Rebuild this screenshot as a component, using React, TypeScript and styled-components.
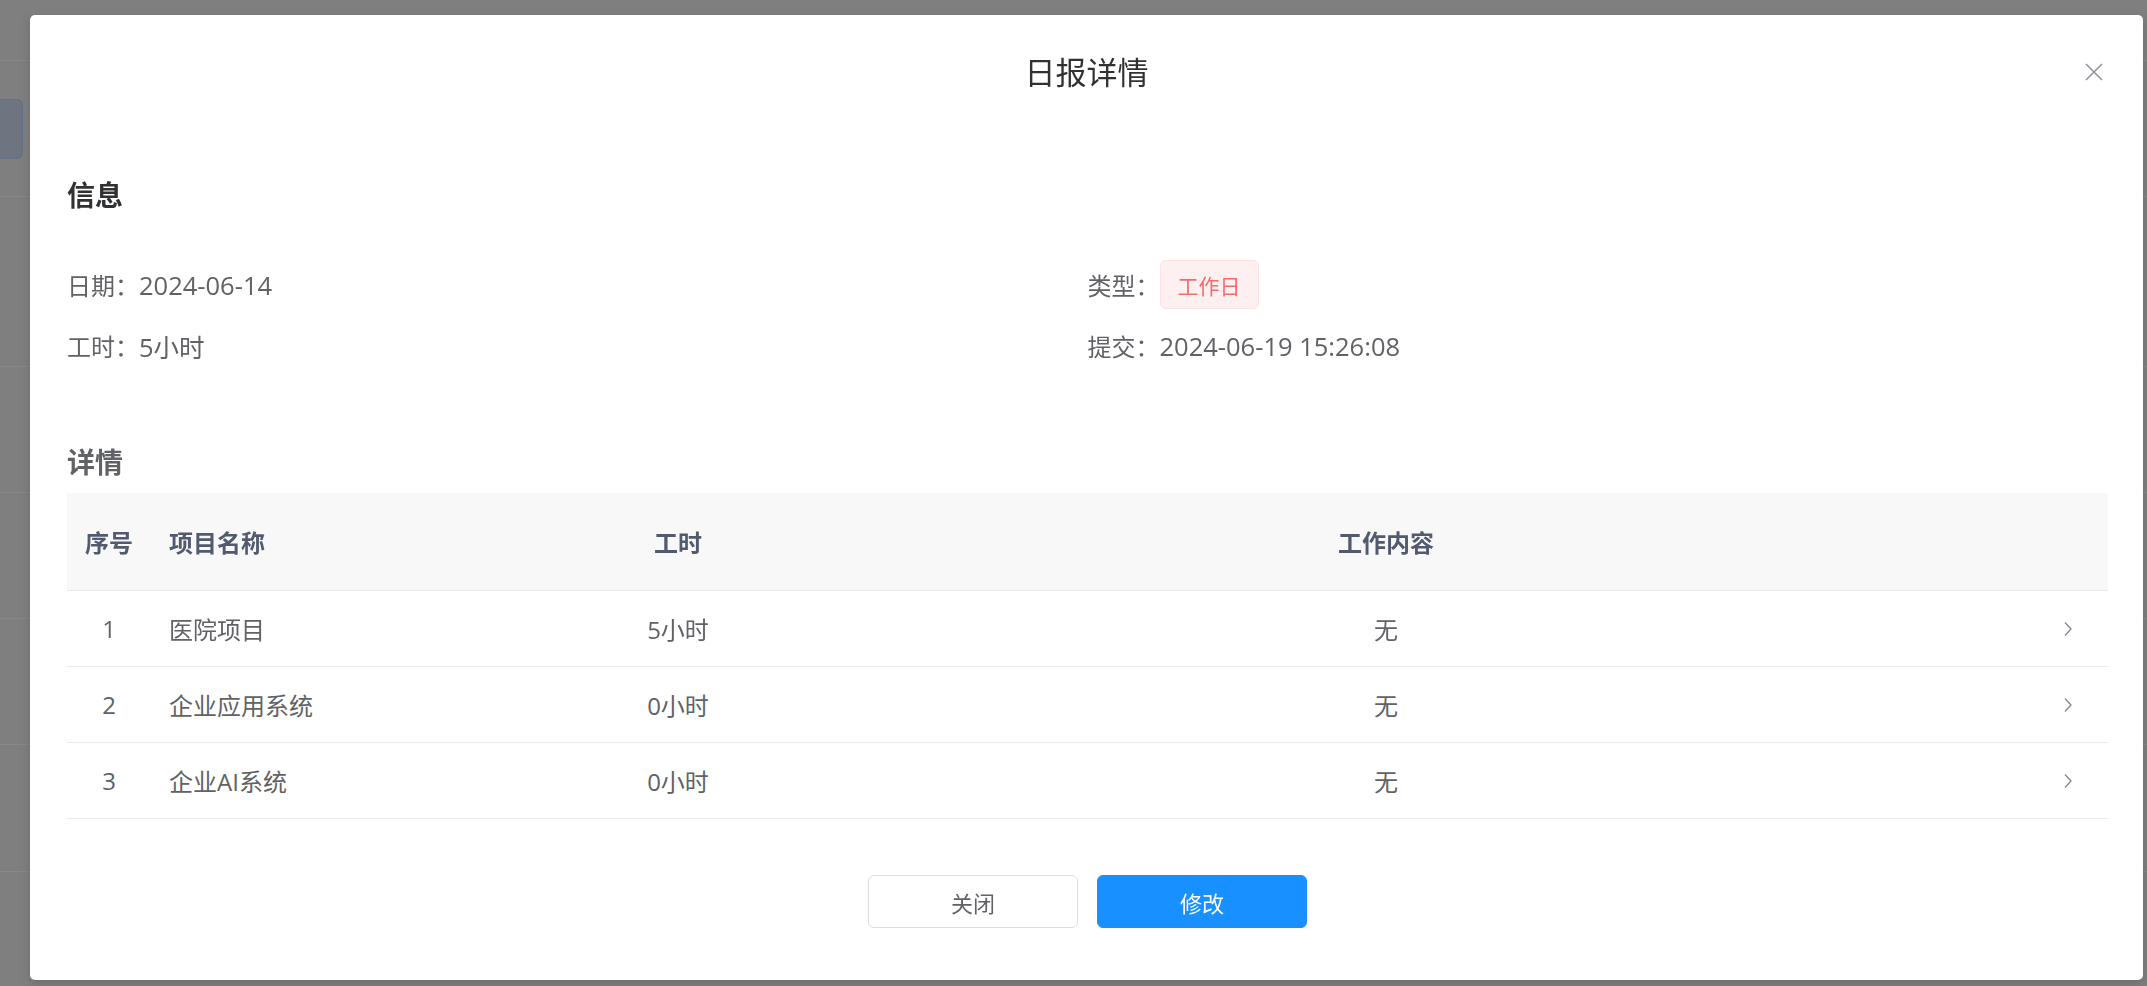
import styled, { createGlobalStyle } from "styled-components";

const GlobalStyle = createGlobalStyle`
  html, body {
    margin: 0;
    padding: 0;
    width: 100%;
    height: 100%;
    overflow: hidden;
  }
  body {
    font-family: "Open Sans", "Noto Sans CJK SC", sans-serif;
    background: #7f7f7f;
  }
`;

const BackPage = styled.div`
  height: 986px;
  display: flex;
  flex-direction: column;
  background: #7f7f7f;
`;

const BackRow = styled.div<{ $h: number }>`
  height: ${(p) => p.$h}px;
  flex-shrink: 0;
  border-bottom: 1px solid #888888;
  display: flex;
  align-items: center;
`;

const BackButton = styled.div`
  width: 27px;
  height: 58px;
  margin-left: -6px;
  border: 1px solid #627287;
  border-radius: 6px;
  background: #6e7580;
`;

const Dialog = styled.div`
  position: fixed;
  left: 30px;
  top: 15px;
  width: 2113px;
  height: 965px;
  background: #ffffff;
  border-radius: 5px;
  box-shadow: 0 4px 12px rgba(0, 0, 0, 0.15);
  display: flex;
  flex-direction: column;
  box-sizing: border-box;
`;

const DialogHeader = styled.div`
  display: grid;
  grid-template-columns: 1fr auto 1fr;
  align-items: center;
  padding: 37px 40px 0 40px;
  height: 40px;
`;

const DialogTitle = styled.div`
  grid-column: 2;
  font-size: 31px;
  line-height: 40px;
  color: #303133;
`;

const CloseBtn = styled.div`
  grid-column: 3;
  justify-self: end;
  width: 18px;
  height: 18px;
  display: flex;
  cursor: pointer;
`;

const DialogBody = styled.div`
  display: flex;
  flex-direction: column;
  padding: 0 35px 0 37px;
`;

const SectionTitle = styled.div<{ $color: string; $top: number }>`
  margin-top: ${(p) => p.$top}px;
  font-size: 28px;
  line-height: 40px;
  font-weight: 700;
  color: ${(p) => p.$color};
`;

const InfoGrid = styled.div`
  margin-top: 45px;
  display: grid;
  grid-template-columns: 1fr 1fr;
  row-gap: 12px;
`;

const InfoItem = styled.div`
  display: flex;
  align-items: center;
  height: 49px;
  font-size: 24px;
  color: #606266;
`;

const InfoLabel = styled.span`
  flex-shrink: 0;
`;

const InfoValue = styled.span`
  font-size: 25.5px;
`;

const Tag = styled.span`
  display: inline-flex;
  align-items: center;
  height: 47px;
  padding: 0 17px;
  border: 1px solid #fde2e2;
  border-radius: 6px;
  background: #fef0f0;
  color: #f56c6c;
  font-size: 21px;
`;

const Table = styled.div`
  margin-top: 11px;
  display: flex;
  flex-direction: column;
`;

const TableRow = styled.div<{ $head?: boolean }>`
  display: grid;
  grid-template-columns: 84px 461px 132px 1fr 80px;
  align-items: center;
  height: ${(p) => (p.$head ? 97 : 75)}px;
  border-bottom: 1px solid #e8eaec;
  background: ${(p) => (p.$head ? "#f8f8f9" : "#ffffff")};
  font-size: 24px;
  font-weight: ${(p) => (p.$head ? 700 : 400)};
  color: ${(p) => (p.$head ? "#515a6e" : "#606266")};
`;

const Cell = styled.div<{ $align?: "left" | "center" }>`
  padding: 0 18px;
  text-align: ${(p) => p.$align ?? "center"};
  white-space: nowrap;
`;

const ArrowCell = styled.div`
  display: flex;
  justify-content: center;
  align-items: center;
`;

const Footer = styled.div`
  margin-top: 56px;
  display: flex;
  justify-content: center;
  gap: 19px;
`;

const Button = styled.button<{ $primary?: boolean }>`
  width: 210px;
  height: 53px;
  border-radius: 6px;
  border: 1px solid ${(p) => (p.$primary ? "#1890ff" : "#dcdee2")};
  background: ${(p) => (p.$primary ? "#1890ff" : "#ffffff")};
  color: ${(p) => (p.$primary ? "#ffffff" : "#606266")};
  font-family: "Open Sans", "Noto Sans CJK SC", sans-serif;
  font-size: 22px;
  cursor: pointer;
`;

const rows = [
  { id: 1, name: "医院项目", hours: "5小时", content: "无" },
  { id: 2, name: "企业应用系统", hours: "0小时", content: "无" },
  { id: 3, name: "企业AI系统", hours: "0小时", content: "无" },
];

const backRows = [60, 135, 169, 125, 125, 125, 126, 121];

export default function App() {
  return (
    <>
      <GlobalStyle />
      <BackPage>
        {backRows.map((h, i) => (
          <BackRow key={i} $h={h}>
            {i === 1 && <BackButton />}
          </BackRow>
        ))}
      </BackPage>

      <Dialog>
        <DialogHeader>
          <DialogTitle>日报详情</DialogTitle>
          <CloseBtn>
            <svg width="18" height="18" viewBox="0 0 18 18">
              <path d="M1 1 L17 17 M17 1 L1 17" stroke="#909399" strokeWidth="1.6" fill="none" />
            </svg>
          </CloseBtn>
        </DialogHeader>

        <DialogBody>
          <SectionTitle $color="#303133" $top={83}>信息</SectionTitle>
          <InfoGrid>
            <InfoItem>
              <InfoLabel>日期：</InfoLabel>
              <InfoValue>2024-06-14</InfoValue>
            </InfoItem>
            <InfoItem>
              <InfoLabel>类型：</InfoLabel>
              <Tag>工作日</Tag>
            </InfoItem>
            <InfoItem>
              <InfoLabel>工时：</InfoLabel>
              <InfoValue>5小时</InfoValue>
            </InfoItem>
            <InfoItem>
              <InfoLabel>提交：</InfoLabel>
              <InfoValue>2024-06-19 15:26:08</InfoValue>
            </InfoItem>
          </InfoGrid>

          <SectionTitle $color="#606266" $top={72}>详情</SectionTitle>
          <Table>
            <TableRow $head>
              <Cell>序号</Cell>
              <Cell $align="left">项目名称</Cell>
              <Cell>工时</Cell>
              <Cell>工作内容</Cell>
              <Cell />
            </TableRow>
            {rows.map((r) => (
              <TableRow key={r.id}>
                <Cell>{r.id}</Cell>
                <Cell $align="left">{r.name}</Cell>
                <Cell>{r.hours}</Cell>
                <Cell>{r.content}</Cell>
                <ArrowCell>
                  <svg width="10" height="16" viewBox="0 0 10 16">
                    <path d="M2 1.5 L8 8 L2 14.5" stroke="#808695" strokeWidth="1.3" fill="none" />
                  </svg>
                </ArrowCell>
              </TableRow>
            ))}
          </Table>

          <Footer>
            <Button>关闭</Button>
            <Button $primary>修改</Button>
          </Footer>
        </DialogBody>
      </Dialog>
    </>
  );
}
